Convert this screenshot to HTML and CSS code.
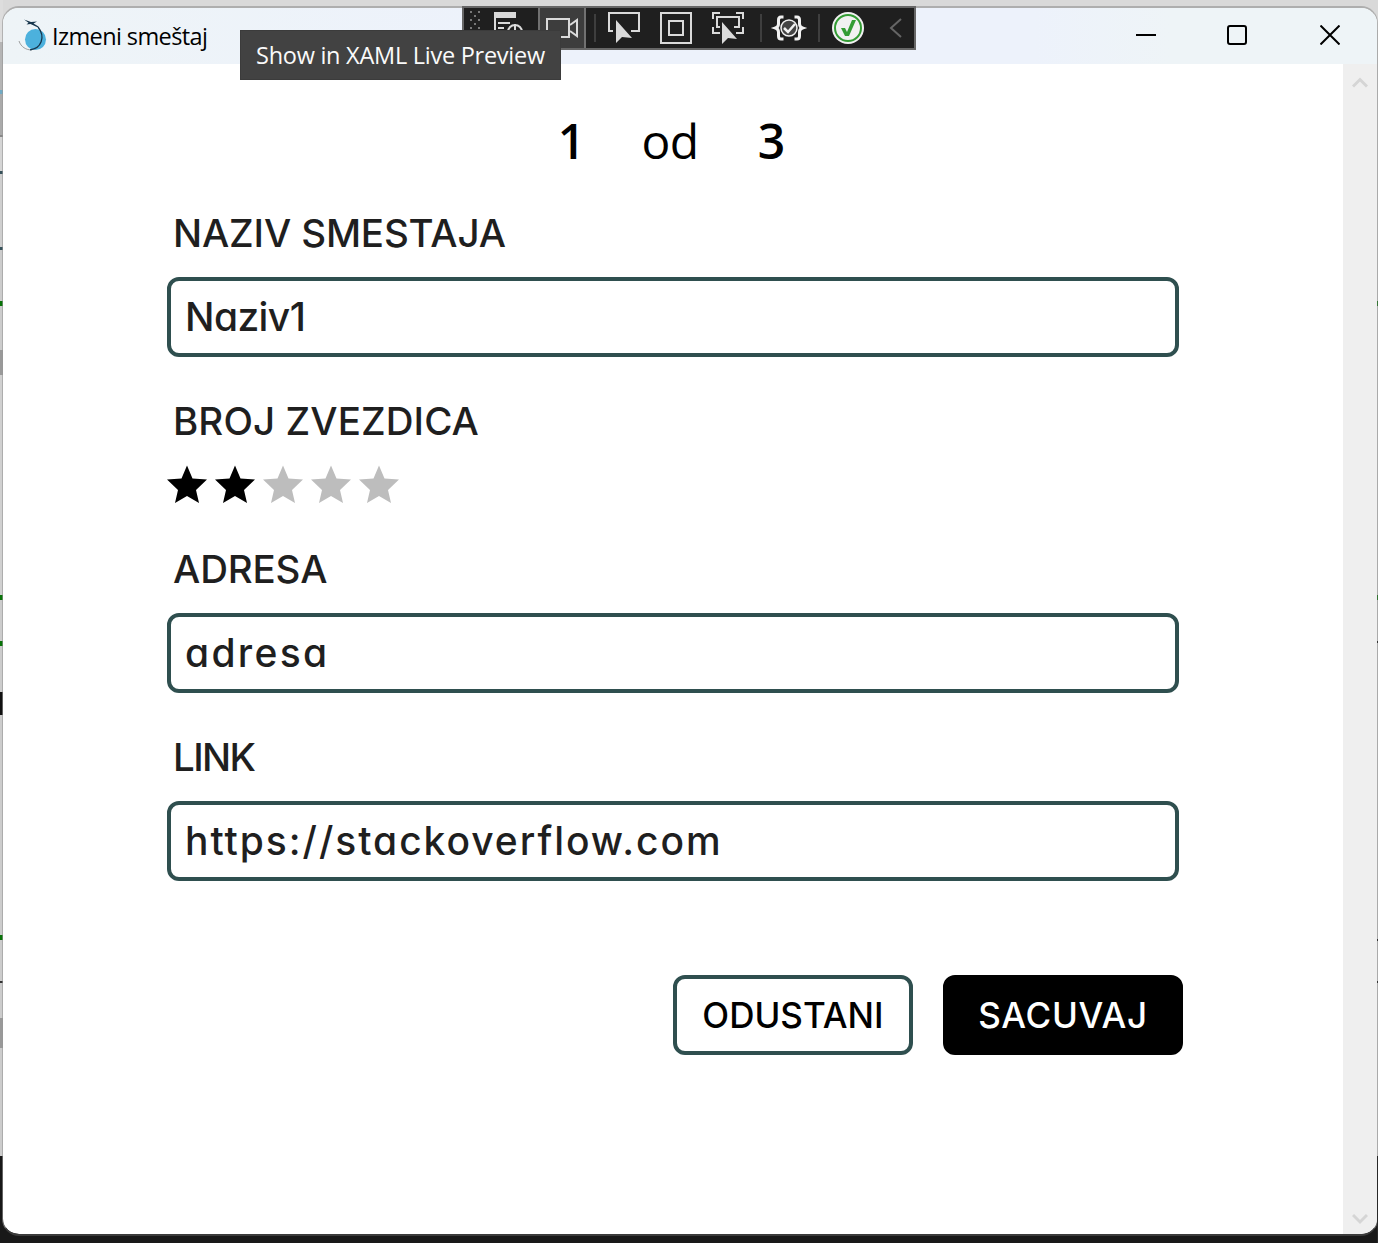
FILE: index.html
```html
<!DOCTYPE html>
<html lang="sr">
<head>
<meta charset="utf-8">
<title>Izmeni smeštaj</title>
<link rel="stylesheet" href="styles.css">
</head>
<body>
<div class="edge edge-left"></div>
<div class="edge edge-right"></div>
<div class="window">
  <header class="titlebar">
    <svg class="app-icon" width="30" height="34" viewBox="0 0 30 34">
      <circle cx="17.500" cy="21.500" r="10.500" fill="#4cb1dd"/>
      <path d="M1 23C3 29 8 32 14 32" fill="none" stroke="#888" stroke-width=".8"/>
      <path d="M12 31.800C23 31 28 19 20 9" fill="none" stroke="#17364d" stroke-width="1.300"/>
      <path d="M6 1.500l7 2.500 6-.5-3.500 2 5 3-1 .8-7-3.300-4 .5 2-1.800z" fill="#17364d"/>
    </svg>
    <h1 class="title">Izmeni smeštaj</h1>
    <div class="controls">
      <svg width="20" height="20" viewBox="0 0 20 20"><path d="M0 10h20"/></svg>
      <svg width="20" height="20" viewBox="0 0 20 20"><rect x="1" y="1" width="18" height="18" rx="2"/></svg>
      <svg width="20" height="20" viewBox="0 0 20 20"><path d="M.5.5l19 19M19.500.5l-19 19"/></svg>
    </div>
  </header>
  <div class="body">
    <main class="content">
      <div class="pager"><b>1</b><span class="of">od</span><b>3</b></div>
      <form class="form">
        <div class="label l-name">NAZIV SMESTAJA</div>
        <div class="field"><span class="v-name">Naziv1</span></div>
        <div class="label l-stars">BROJ ZVEZDICA</div>
        <div class="stars">
          <svg viewBox="0 0 40 40"><path d="M20 .5l5.500 13 14.500 1-11 10.500 3 13-12-7-12 7 3-13-11-10.500 14.500-1z"/></svg>
          <svg viewBox="0 0 40 40"><path d="M20 .5l5.500 13 14.500 1-11 10.500 3 13-12-7-12 7 3-13-11-10.500 14.500-1z"/></svg>
          <svg class="off" viewBox="0 0 40 40"><path d="M20 .5l5.500 13 14.500 1-11 10.500 3 13-12-7-12 7 3-13-11-10.500 14.500-1z"/></svg>
          <svg class="off" viewBox="0 0 40 40"><path d="M20 .5l5.500 13 14.500 1-11 10.500 3 13-12-7-12 7 3-13-11-10.500 14.500-1z"/></svg>
          <svg class="off" viewBox="0 0 40 40"><path d="M20 .5l5.500 13 14.500 1-11 10.500 3 13-12-7-12 7 3-13-11-10.500 14.500-1z"/></svg>
        </div>
        <div class="label l-address">ADRESA</div>
        <div class="field"><span class="v-address">adresa</span></div>
        <div class="label l-link">LINK</div>
        <div class="field"><span class="v-link">https://stackoverflow.com</span></div>
        <div class="actions">
          <button type="button" class="btn cancel"><span>ODUSTANI</span></button>
          <button type="button" class="btn save"><span>SACUVAJ</span></button>
        </div>
      </form>
    </main>
    <aside class="scrollbar">
      <svg width="16" height="12" viewBox="0 0 16 12"><path d="M1 9.500L8 2.500l7 7"/></svg>
      <svg width="16" height="12" viewBox="0 0 16 12"><path d="M1 2l7 7 7-7"/></svg>
    </aside>
  </div>
</div>
<div class="debugbar">
  <svg width="450" height="40" viewBox="464 8 450 40">
    <g fill="#777"><path d="M470 11h2v2h-2zM478 11h2v2h-2zM474 15h2v2h-2zM470 19h2v2h-2zM478 19h2v2h-2zM474 23h2v2h-2zM470 27h2v2h-2zM478 27h2v2h-2z"/></g>
    <path d="M540 8h44v40h-44z" fill="#3d3d3d"/>
    <path d="M539 8v40M585 8v40" stroke="#717171" stroke-width="2"/>
    <path d="M595 14v28M761 14v28M819 14v28" stroke="#3e3e3e" stroke-width="2"/>
    <g fill="none" stroke="#dadada" stroke-width="2">
      <path d="M494 12h22v6h-22z" fill="#dadada" stroke="none"/>
      <path d="M495 16v22h10M498 23h12M498 28h6M508 32a7 7 0 0 1 14 0M515 24v8"/>
      <path d="M561 37h8V19h-22v18h14M570 25l7-5v16l-7-5"/>
      <path d="M613 31h-4V13h30v18h-8M661 13h30v30h-30zM669 21h14v14h-14z"/>
      <path d="M720 13h-7v6M736 13h7v6M713 27v6h7M743 27v6h-7M720 27h-3V17h22v10h-5"/>
    </g>
    <path d="M616 20v23l6-6 10 1zM722 22v22l6-6 9 1z" fill="#dadada"/>
    <g fill="none" stroke="#f1f1f1">
      <path d="M783.500 17h-2.500q-2.500 0-2.500 3v4q0 3-3 4q3 1 3 4v4q0 3 2.500 3h2.500M794.500 17h2.500q2.500 0 2.500 3v4q0 3 3 4q-3 1-3 4v4q0 3-2.500 3h-2.500" stroke-width="3"/>
      <circle cx="789" cy="28" r="8" fill="#444" stroke-width="1.500"/>
      <path d="M784 28l4 4 7-8" stroke-width="2.500"/>
    </g>
    <circle cx="848" cy="28" r="16" fill="#f1f1f1"/>
    <circle cx="848" cy="28" r="13" fill="none" stroke="#339c34" stroke-width="2"/>
    <path d="M841 28h4l2 4 5-12h4l-7 16h-4z" fill="#339c34"/>
    <path d="M901 19l-10 9 10 9" fill="none" stroke="#656565" stroke-width="2"/>
  </svg>
</div>
<div class="tooltip"><span>Show in XAML Live Preview</span></div>
</body>
</html>
```
FILE: styles.css
```css
* { box-sizing: border-box; }

body {
  position: relative;
  margin: 0;
  height: 1243px;
  padding: 6px 0 0 2px;
  overflow: hidden;
  background: linear-gradient(#d9d9d9 0 1155px, #181818 1155px);
}

/* slivers of the windows behind this one */
.edge { position: absolute; top: 0; width: 3px; height: 1243px; }
.edge-left {
  left: 0;
  background: linear-gradient(#ddd 0 42px, #b5b5b5 42px 90px, #71aac4 90px 94px, #aaa 94px 135px, #888 135px 137px, #d5d5d5 137px 171px, #36515a 171px 174px, #cfcfcf 174px 247px, #36515a 247px 250px, #ccc 250px 301px, #087308 301px 306px, #ccc 306px 350px, #999 350px 375px, #d0d0d0 375px 595px, #087308 595px 600px, #ccc 600px 641px, #087308 641px 646px, #ccc 646px 692px, #111 692px 715px, #ccc 715px 935px, #087308 935px 940px, #ccc 940px 981px, #333 981px 983px, #ccc 983px 1018px, #999 1018px 1048px, #ccc 1048px 1156px, #181818 1156px);
}
.edge-right {
  right: 0;
  width: 1px;
  z-index: 2;
  background: linear-gradient(transparent 0 30px, #aaa 30px 301px, #347334 301px 306px, #aaa 306px 595px, #347334 595px 600px, #aaa 600px 641px, #333 641px 643px, #aaa 643px 939px, #333 939px 941px, #aaa 941px 981px, #333 981px 983px, #aaa 983px 1156px, #282828 1156px);
}

.window {
  position: relative;
  width: 1376px;
  height: 1230px;
  border: 1px solid rgba(150, 150, 150, 0.6);
  border-width: 2px 1px;
  border-top-color: #aeaeae;
  border-bottom-color: #3b3b3b;
  border-radius: 17px;
  overflow: hidden;
  background: #fff;
  background-clip: padding-box;
  display: flex;
  flex-direction: column;
}

.titlebar {
  flex: none;
  height: 56px;
  padding: 0 27px 0 15px;
  display: flex;
  align-items: center;
  background: linear-gradient(90deg, #eef4f7, #edf2fb 35%, #edf2fb 75%, #eef4f7 85%);
}
.app-icon { margin-bottom: 3px; }
.title {
  margin: 0 0 0 4px;
  font: 400 23.500px "Open Sans", "Noto Sans", sans-serif;
  letter-spacing: -0.600px;
}
.controls { margin: 0 10px 2px auto; display: flex; gap: 71px; }
.controls svg { fill: none; stroke: #000; stroke-width: 2; }
.controls svg:last-child { margin-left: 2px; }

.body { flex: 1; display: flex; min-height: 0; }
.content { flex: 1; }
.pager {
  height: 125px;
  padding: 27px 0 0 517px;
  display: grid;
  grid-template-columns: repeat(3, 100px);
  justify-items: center;
  font: 400 48px/100px "Open Sans", "Noto Sans", sans-serif;
}
.pager b { padding-left: 3px; font-weight: 600; }
.of { letter-spacing: -0.600px; }

.form {
  width: 1012px;
  margin-left: 164px;
  font-family: Inter, "Liberation Sans", sans-serif;
  font-weight: 500;
  font-feature-settings: "cv11", "calt" 0;
  color: #1f1f1f;
}
.label { height: 88px; padding-left: 6px; font-size: 38.500px; line-height: 88px; white-space: nowrap; }
.field {
  height: 80px;
  margin-bottom: 20px;
  padding-left: 14px;
  border: 4px solid #2f4f4f;
  border-radius: 12px;
  font-size: 39px;
  line-height: 72px;
}
.l-name, .l-address { letter-spacing: -0.160px; }
.l-stars { letter-spacing: 0.080px; }
.l-link { letter-spacing: -1.600px; }
.v-name { letter-spacing: -0.600px; }
.v-address { letter-spacing: 2.300px; }
.v-link { letter-spacing: 1.950px; }

.stars { height: 40px; margin-bottom: 20px; display: flex; gap: 8px; }
.stars svg { width: 40px; height: 40px; }
.stars .off { fill: #bdbdbd; }

.actions { margin: 94px -4px 0 0; display: flex; justify-content: flex-end; gap: 30px; }
.btn {
  width: 240px;
  height: 80px;
  padding: 0;
  border: 4px solid #2f4f4f;
  border-radius: 12px;
  background: #fff;
  color: #000;
  font: inherit;
  font-size: 35px;
  line-height: 72px;
}
.save { border-color: #000; background: #000; color: #fff; letter-spacing: 0.700px; }

.scrollbar {
  width: 34px;
  padding: 13px 9px 9px;
  display: flex;
  flex-direction: column;
  justify-content: space-between;
  background: #efefef;
}
.scrollbar svg { fill: none; stroke: #d5d5d5; stroke-width: 3; }

.debugbar {
  position: absolute;
  left: 462px;
  top: 6px;
  width: 454px;
  height: 44px;
  border: 2px solid #676767;
  background: #1f1f1f;
}
.debugbar svg { display: block; }
.tooltip {
  position: absolute;
  left: 240px;
  top: 30px;
  width: 321px;
  height: 50px;
  padding-left: 15px;
  border: 1px solid #3b3b3b;
  background: #424242;
  color: #fafafa;
  font: 400 23.500px/49px "Open Sans", "Noto Sans", sans-serif;
  letter-spacing: -0.260px;
  white-space: nowrap;
}
```
